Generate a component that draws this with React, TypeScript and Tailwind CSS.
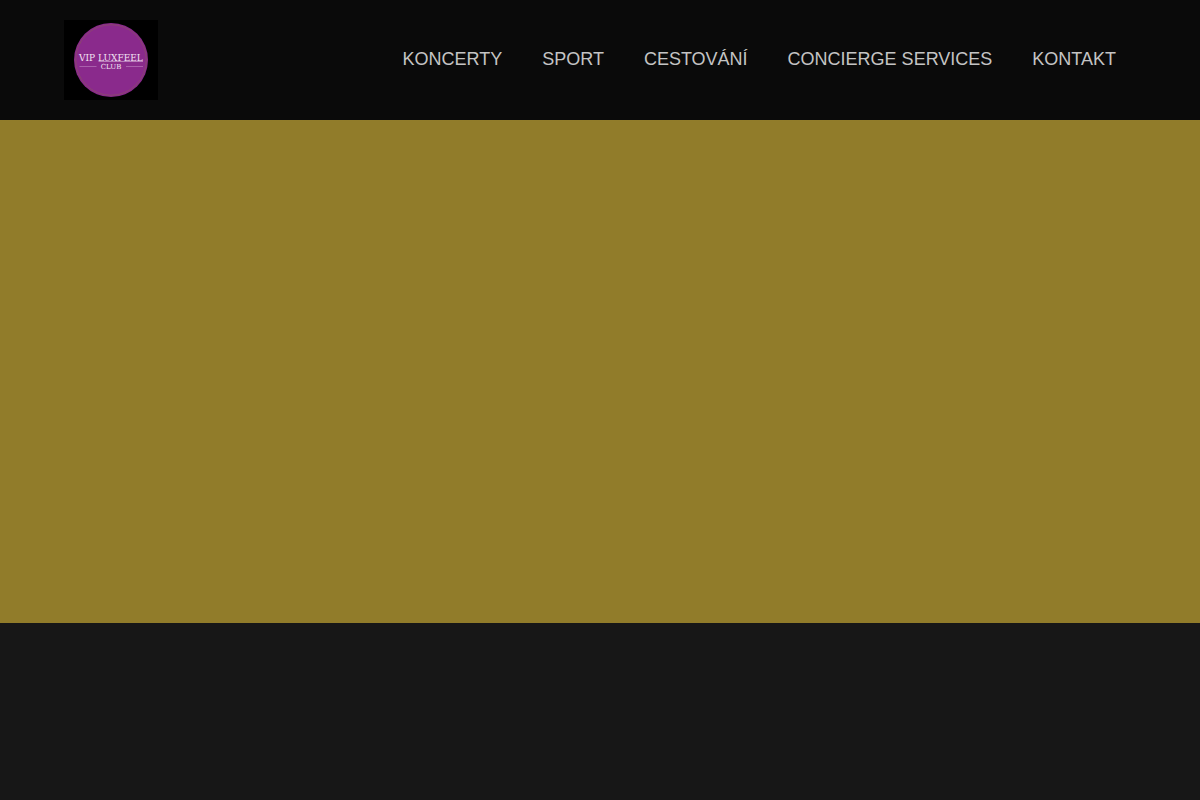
/*
 * Landing page of the VIP Luxfeel Club: a dark header with the logo and main
 * navigation, a gold hero band and the dark content area that follows it.
 */
import React from 'react';

interface NavItem {
  label: string;
  href: string;
}

const NAV_ITEMS: NavItem[] = [
  { label: 'KONCERTY', href: '#koncerty' },
  { label: 'SPORT', href: '#sport' },
  { label: 'CESTOVÁNÍ', href: '#cestovani' },
  { label: 'CONCIERGE SERVICES', href: '#concierge-services' },
  { label: 'KONTAKT', href: '#kontakt' },
];

const Logo: React.FC = () => (
  <svg viewBox="0 0 94 80" className="h-20 w-auto bg-black" role="img" aria-label="VIP Luxfeel Club">
    <circle cx="47" cy="40" r="37" fill="#8a2a8c" />
    <circle cx="47" cy="40" r="35.3" fill="none" stroke="#8a4a68" strokeWidth="0.8" />
    <g fill="#f3e4f4" fontFamily="'DejaVu Serif', serif">
      <text x="15" y="41" fontSize="9">VIP</text>
      <text x="34" y="41" fontSize="9">LUXFEEL</text>
      <text x="47" y="49" fontSize="7" textAnchor="middle">CLUB</text>
    </g>
    <path d="M34.5 41.5H79" stroke="#d9b3da" strokeWidth="0.6" />
    <path d="M15.5 46.5H32.5M62 46.5H79" stroke="#b878ba" strokeWidth="0.7" />
  </svg>
);

const Header: React.FC = () => (
  <header className="flex items-center justify-between bg-[#0a0a0a] px-16 py-5">
    <a href="#top">
      <Logo />
    </a>
    <nav>
      <ul className="flex items-center">
        {NAV_ITEMS.map((item) => (
          <li key={item.href}>
            <a href={item.href} className="block px-5 pb-0.5 text-lg text-[#c4c4c4] hover:text-white">
              {item.label}
            </a>
          </li>
        ))}
      </ul>
    </nav>
  </header>
);

const App: React.FC = () => (
  <div id="top" className="flex min-h-screen flex-col bg-[#171717] font-['Liberation_Sans',Arial,sans-serif]">
    <Header />
    <main className="flex-1">
      {/* Hero */}
      <section className="min-h-[503px] bg-[#917c2a]" />
    </main>
  </div>
);

export default App;
